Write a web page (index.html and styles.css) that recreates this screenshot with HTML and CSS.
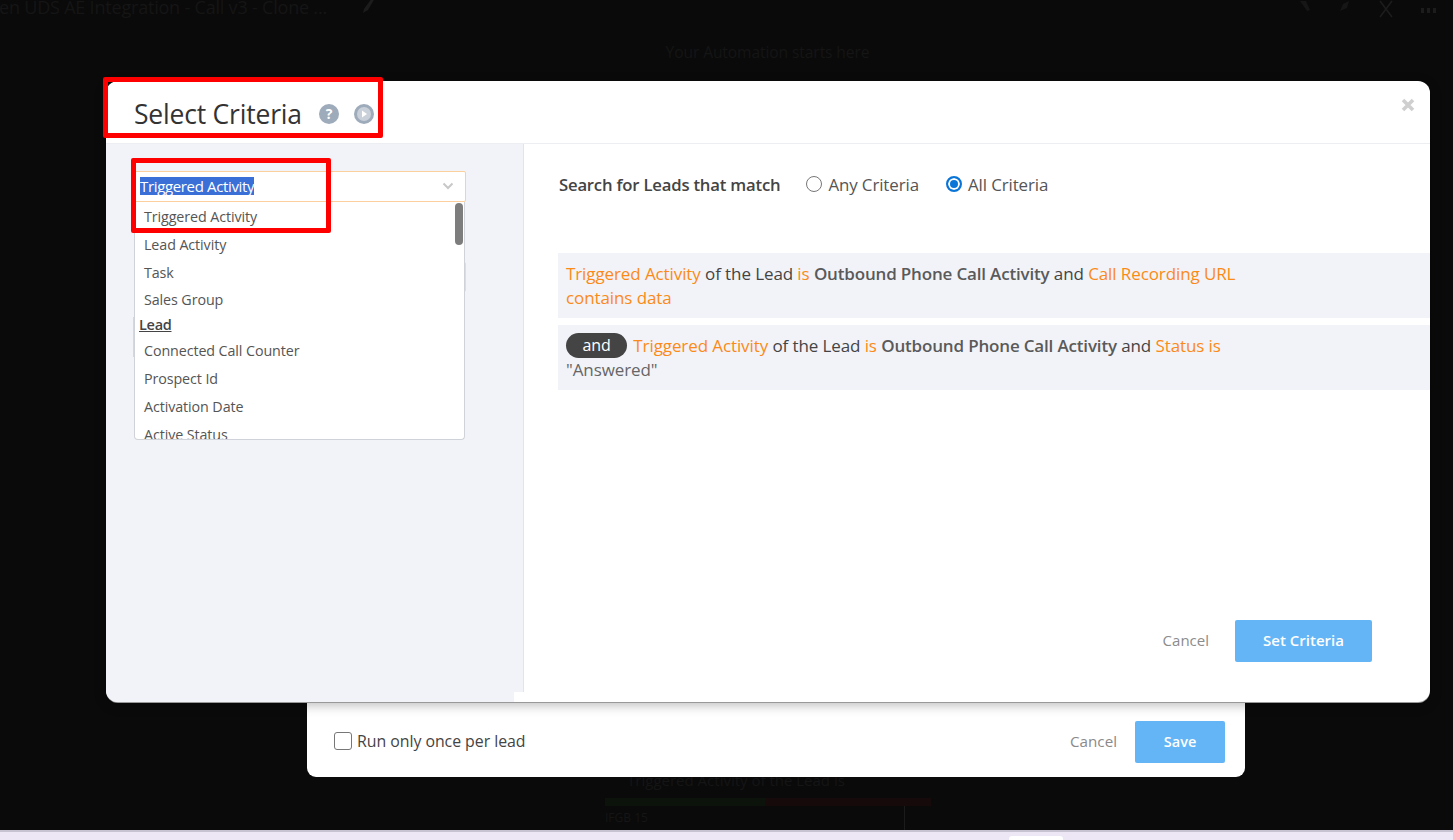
FILE: index.html
```html
<!DOCTYPE html>
<html lang="en">
<head>
<meta charset="utf-8">
<title>Select Criteria</title>
<link rel="stylesheet" href="styles.css">
</head>
<body>
<div class="backdrop">
  <div class="topbar">
    <div class="automation-name">en UDS AE Integration - Call v3 - Clone ...</div>
    <svg class="pencil" width="18" height="16" viewBox="0 0 18 16"><path d="M3 15l1-4L12 0h3l-7 12z" fill="#1c1c1c"/></svg>
    <div class="top-tools">
      <svg width="12" height="12" viewBox="0 0 12 12"><path d="M1 1h6l4 9-3 1z" fill="#161616"/></svg>
      <svg width="12" height="12" viewBox="0 0 12 12"><path d="M1 11l3-7 6-3-2 7z" fill="#161616"/></svg>
      <svg width="14" height="18" viewBox="0 0 14 18"><path d="M1 1l12 16M13 1L1 17" stroke="#1c1c1c" stroke-width="1.600" fill="none"/></svg>
      <div class="dots"><i></i><i></i><i></i></div>
    </div>
  </div>
  <div class="starts-here">Your Automation starts here</div>
  <div class="behind-text">Triggered Activity of the Lead is</div>
  <div class="behind-bar"><i class="bar-green"></i><i class="bar-red"></i></div>
  <div class="behind-chart"><span>IFGB 15</span></div>
</div>
<div class="strip"><span class="strip-tab"></span></div>

<section class="run-card">
  <label class="run-check"><span class="checkbox"></span>Run only once per lead</label>
  <div class="run-actions">
    <span class="cancel">Cancel</span>
    <button class="btn btn-save">Save</button>
  </div>
</section>

<section class="modal">
  <header class="modal-head">
    <h1>Select Criteria</h1>
    <svg class="head-icon" width="20" height="20" viewBox="0 0 20 20"><circle cx="10" cy="10" r="10" fill="#9eabba"/><text x="10" y="15" text-anchor="middle" class="q-mark">?</text></svg>
    <svg class="head-icon" width="20" height="20" viewBox="0 0 20 20"><circle cx="10" cy="10" r="10" fill="#9eabba"/><circle cx="10" cy="10" r="7" fill="#c9d0d9"/><path d="M8 6.500l5 3.500-5 3.500z" fill="#fff"/></svg>
    <svg class="close" width="14" height="14" viewBox="0 0 14 14"><path d="M2 2l10 10M12 2L2 12" stroke="#cfcfcf" stroke-width="3.600" fill="none"/></svg>
  </header>
  <div class="modal-body">
    <aside class="side">
      <div class="select"><span class="selected-text">Triggered Activity</span>
        <svg width="12" height="8" viewBox="0 0 12 8"><path d="M1.500 1.500L6 6l4.500-4.500" stroke="#c8c8c8" stroke-width="2" fill="none"/></svg>
      </div>
      <div class="ghost-input"></div>
      <div class="ghost-line"></div>
      <div class="dropdown">
        <ul>
          <li>Triggered Activity</li>
          <li>Lead Activity</li>
          <li class="row-27">Task</li>
          <li class="row-25">Sales Group</li>
          <li class="group">Lead</li>
          <li>Connected Call Counter</li>
          <li>Prospect Id</li>
          <li>Activation Date</li>
          <li>Active Status</li>
        </ul>
        <span class="scroll-thumb"></span>
      </div>
      <span class="notch"></span>
    </aside>
    <main class="content">
      <div class="match-row">
        <strong>Search for Leads that match</strong>
        <label class="radio-label"><span class="radio"></span>Any Criteria</label>
        <label class="radio-label"><span class="radio radio-on"></span>All Criteria</label>
      </div>
      <div class="rules">
        <div class="rule"><span class="o">Triggered Activity</span> of the Lead <span class="o">is</span> <b>Outbound Phone Call Activity</b> and <span class="o">Call Recording URL<br>contains data</span></div>
        <div class="rule"><span class="pill">and</span> <span class="o">Triggered Activity</span> of the Lead <span class="o">is</span> <b>Outbound Phone Call Activity</b> and <span class="o">Status is</span><br><span class="val">"Answered"</span></div>
      </div>
      <div class="modal-actions">
        <span class="cancel">Cancel</span>
        <button class="btn btn-set">Set Criteria</button>
      </div>
    </main>
  </div>
</section>

<div class="mark mark-title"></div>
<div class="mark mark-select"></div>
</body>
</html>
```
FILE: styles.css
```css
* { box-sizing: border-box; }
html, body { margin: 0; height: 840px; overflow: hidden; }
body {
  background: #0a0a0a;
  font-family: "Open Sans", "Noto Sans", sans-serif;
  color: #333;
  display: flex;
  flex-direction: column;
  position: relative;
}
.backdrop { height: 830px; flex: none; color: #151515; position: relative; overflow: hidden; }
.topbar { display: flex; align-items: flex-start; height: 20px; }
.automation-name { font-size: 18px; line-height: 14px; white-space: nowrap; margin-left: -1px; letter-spacing: -.2px; }
.pencil { margin: -2px 0 0 33px; }
.top-tools { margin-left: auto; display: flex; align-items: flex-start; gap: 28px; padding: 0 17px 0 0; }
.dots { display: flex; gap: 3px; margin-top: 8px; }
.dots i { width: 3px; height: 5px; background: #1c1c1c; }
.starts-here { text-align: center; font-size: 15.600px; line-height: 18px; margin: 23px 0 0 82px; letter-spacing: -.1px; }
.behind-text { position: absolute; left: 486px; top: 770px; width: 500px; text-align: center; font-size: 15px; }
.behind-bar { position: absolute; left: 605px; top: 798px; width: 326px; height: 8px; display: flex; }
.behind-bar i { display: block; height: 8px; }
.bar-green { width: 160px; background: #0b130b; }
.bar-red { flex: 1; background: #170a0b; }
.behind-chart { position: absolute; left: 605px; top: 806px; width: 300px; height: 24px; font-size: 12px; border-right: 1px solid #1b1b1b; line-height: 24px; }
.strip { flex: 1; background: #ece6f5; border-top: 2px solid #c8c3d0; position: relative; }
.strip-tab { position: absolute; left: 1009px; top: 4px; width: 54px; height: 6px; background: #fff; border-radius: 3px 3px 0 0; }

.run-card {
  position: absolute; left: 307px; top: 690px; width: 938px; height: 87px;
  background: #fff; border-radius: 0 0 9px 9px;
  display: flex; align-items: flex-end; justify-content: space-between;
  padding: 0 20px 14px 27px;
}
.run-check { display: flex; align-items: center; gap: 5px; font-size: 15.900px; color: #444; height: 40px; margin-bottom: 2px; letter-spacing: -.05px; }
.checkbox { width: 18px; height: 18px; border: 1.500px solid #777; border-radius: 3px; background: #fff; }
.run-actions { display: flex; align-items: center; gap: 18px; }
.cancel { color: #8a8a8a; font-size: 15.200px; padding-bottom: 2px; }
.btn { border: 0; background: #64b5f6; color: #fff; font: 600 14.500px "Open Sans", sans-serif; border-radius: 2px; padding: 0 0 2px; }
.btn-save { width: 90px; height: 42px; }
.btn-set { width: 137px; height: 42px; font-size: 15px; }

.modal {
  position: absolute; left: 106px; top: 81px; width: 1324px; height: 621px;
  background: #fff; border-radius: 12px; overflow: hidden;
  display: flex; flex-direction: column;
  box-shadow: 0 1px 0 #999, 0 3px 12px rgba(0,0,0,.28);
}
.modal-head { height: 63px; flex: none; display: flex; align-items: center; padding: 3px 0 0 28px; border-bottom: 1px solid #eceef2; position: relative; }
.modal-head h1 { margin: 0 17px 0 0; font-size: 26.500px; font-weight: 400; color: #333; line-height: 34px; letter-spacing: -.2px; }
.head-icon { margin-right: 15px; flex: none; }
.q-mark { font: 700 14px "Open Sans", sans-serif; fill: #fff; }
.close { position: absolute; right: 15px; top: 17px; }
.modal-body { flex: 1; display: flex; min-height: 0; }
.side { width: 418px; flex: none; background: #f2f3f8; border-right: 1px solid #e2e4ea; position: relative; padding: 27px 0 0 28px; }
.select { width: 332px; height: 31px; background: #fff; border: 1px solid #fbcf9e; border-radius: 2px; display: flex; align-items: center; justify-content: space-between; padding: 0 11px 2px 5px; font-size: 15px; line-height: 18px; }
.selected-text { background: #3a6fd8; color: #fff; letter-spacing: -.35px; }
.ghost-input { width: 332px; height: 30px; margin-top: 60px; background: #fff; border: 1px solid #ddd; border-radius: 2px; }
.ghost-line { width: 1px; height: 40px; margin: 25px 0 0 -1px; background: #cfdccf; }
.dropdown { position: absolute; left: 28px; top: 58px; width: 331px; height: 238px; background: #fff; border: 1px solid #cfd2d8; border-top: 0; border-radius: 0 0 4px 4px; overflow: hidden; }
.dropdown ul { list-style: none; margin: 0; padding: 2px 0 0; font-size: 14.300px; color: #555; letter-spacing: -.1px; }
.dropdown li { height: 28px; line-height: 26px; padding-left: 9px; white-space: nowrap; }
.dropdown li.row-27 { height: 27px; }
.dropdown li.row-25 { height: 25px; }
.dropdown li.group { height: 26px; padding-left: 4px; font-weight: 600; font-size: 14.500px; color: #444; text-decoration: underline; letter-spacing: -.3px; }
.scroll-thumb { position: absolute; right: 1px; top: 1px; width: 8px; height: 42px; background: #7d7d7d; border-radius: 4px; }
.notch { position: absolute; right: -1px; bottom: 0; width: 10px; height: 10px; background: #fff; }
.content { flex: 1; min-width: 0; padding: 29px 0 0 34px; position: relative; display: flex; flex-direction: column; }
.match-row { display: flex; align-items: center; height: 22px; color: #444; }
.match-row strong { font-weight: 600; font-size: 16.700px; letter-spacing: -.2px; margin: 0 26px 0 1px; }
.radio-label { display: flex; align-items: center; gap: 6px; margin-right: 27px; font-size: 16.900px; color: #555; letter-spacing: -.1px; }
.radio { width: 16px; height: 16px; border-radius: 50%; border: 1px solid #777; background: #fff; }
.radio-on { border: 2px solid #0a75d8; box-shadow: inset 0 0 0 2px #fff; background: #0a75d8; }
.rules { margin-top: 58px; display: flex; flex-direction: column; gap: 7px; }
.rule { background: #f2f3f8; padding: 9px 0 9px 8px; height: 65px; line-height: 24px; font-size: 17px; color: #444; letter-spacing: -.1px; white-space: nowrap; }
.rule b { font-weight: 600; color: #5a5a5a; letter-spacing: -.17px; }
.o { color: #fb8a17; }
.val { color: #666; }
.pill { display: inline-block; vertical-align: top; background: #444; color: #fff; width: 61px; height: 25px; margin: -1px 2px -1px 0; line-height: 25px; font-size: 16px; text-align: center; border-radius: 13px; }
.modal-actions { position: absolute; right: 58px; top: 476px; display: flex; align-items: center; gap: 26px; }
.modal-actions .cancel { font-size: 15px; color: #8c8c8c; }

.mark { position: absolute; border: 5px solid #fe0000; border-radius: 2px; pointer-events: none; }
.mark-title { left: 103px; top: 77px; width: 280px; height: 61px; }
.mark-select { left: 131px; top: 158px; width: 200px; height: 75px; }
```
